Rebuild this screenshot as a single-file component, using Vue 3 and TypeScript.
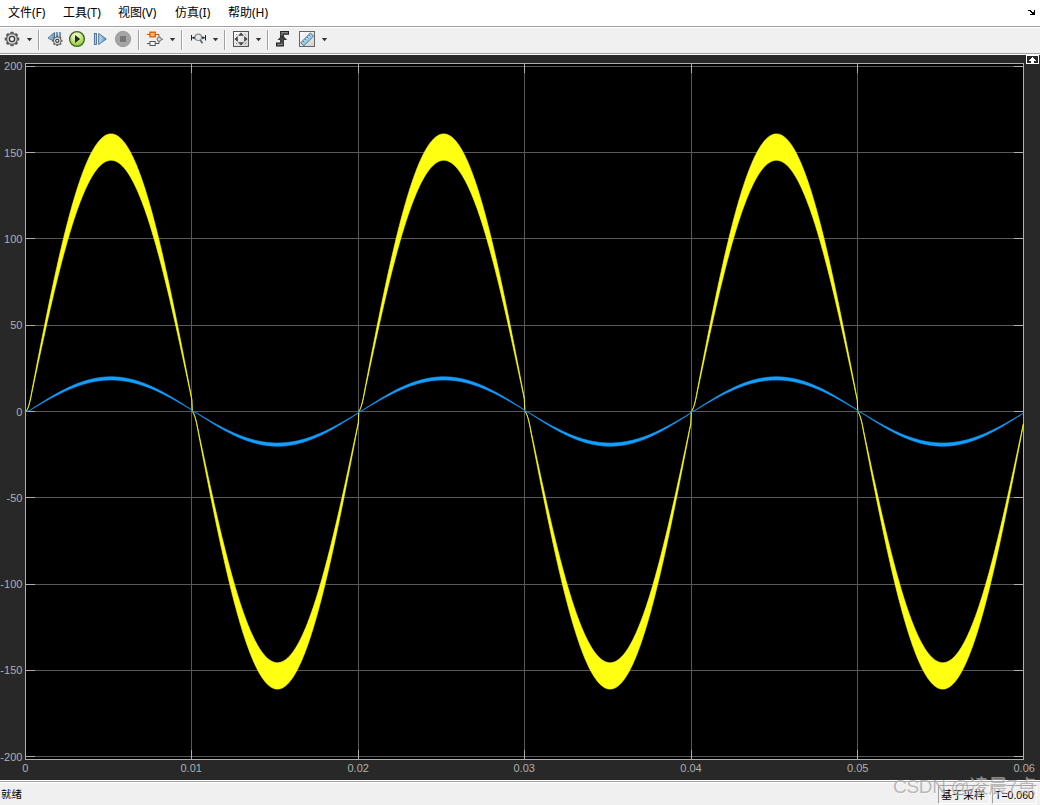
<script setup lang="ts">
interface Curve { fill: string; stroke: number; d: string }

const menus = ['文件(F)', '工具(T)', '视图(V)', '仿真(I)', '帮助(H)']

const zeroY = 411.5
const left = 25.5
const period = 998 / 3
const lag = 2.1

function band(outer: number, inner: number): string {
  const top: string[] = []
  const bottom: string[] = []
  for (let i = 0; i <= 1995; i++) {
    const t = i / 2
    const half = Math.floor(t / (period / 2))
    const sign = half % 2 === 0 ? 1 : -1
    const local = t - half * (period / 2)
    const ramp = local < 6 ? (local * local) / 12 + local * 0.15 : local - lag
    const s = Math.sin((2 * Math.PI * ramp) / period) * sign
    const x = (left + t + 0.3).toFixed(2)
    top.push(`${x},${(zeroY - outer * s).toFixed(2)}`)
    bottom.push(`${x},${(zeroY - inner * s).toFixed(2)}`)
  }
  return `M${top.join('L')}L${bottom.reverse().join('L')}Z`
}

const curves: Curve[] = [
  { fill: '#ffff11', stroke: 0.7, d: band(277.6, 251.2) },
  { fill: '#139fff', stroke: 0.7, d: band(34.7, 31.5) },
]

const yTicks = [
  { v: 200, y: 66.5, base: 70 },
  { v: 150, y: 152.5, base: 157 },
  { v: 100, y: 238.5, base: 243 },
  { v: 50, y: 325.5, base: 329 },
  { v: 0, y: 411.5, base: 416 },
  { v: -50, y: 497.5, base: 502 },
  { v: -100, y: 584.5, base: 588 },
  { v: -150, y: 670.5, base: 674 },
  { v: -200, y: 756.5, base: 761 },
]
const xTicks = [
  { label: '0', x: 25.5, mid: 25.2 },
  { label: '0.01', x: 191.5, mid: 191.2 },
  { label: '0.02', x: 358.5, mid: 358.2 },
  { label: '0.03', x: 524.5, mid: 524.2 },
  { label: '0.04', x: 691.5, mid: 691 },
  { label: '0.05', x: 857.5, mid: 857.8 },
  { label: '0.06', x: 1023.5, mid: 1024.2 },
]
const teeth = [0, 45, 90, 135, 180, 225, 270, 315]
</script>

<template>
  <div class="scope">
    <nav class="menubar">
      <span v-for="m in menus" :key="m">{{ m }}</span>
      <svg class="dock" width="8" height="8" viewBox="0 0 8 8" shape-rendering="crispEdges">
        <path d="M0 1h3v1h1v1h2V1h1v5H2V5h2V4H3V3H2V2H0z" fill="#000" />
      </svg>
    </nav>
    <div class="toolbar">
      <svg width="340" height="24" viewBox="0 28 340 24">
        <defs>
          <radialGradient id="run" cx=".45" cy=".3" r=".75">
            <stop offset="0" stop-color="#fbffe9" /><stop offset=".5" stop-color="#c3e77b" /><stop offset="1" stop-color="#7abb25" />
          </radialGradient>
          <linearGradient id="step" x1="0" x2="1"><stop offset="0" stop-color="#b9e0f7" /><stop offset="1" stop-color="#5697c7" /></linearGradient>
          <linearGradient id="box" x1="0" x2="1" y1="0" y2="1"><stop offset="0" stop-color="#fff" /><stop offset="1" stop-color="#cfcfcf" /></linearGradient>
        </defs>
        <g v-for="x in [38, 138, 181, 224, 267]" :key="x">
          <path :d="`M${x + .5} 30V50`" stroke="#a0a0a0" /><path :d="`M${x + 1.5} 30V50`" stroke="#fff" />
        </g>
        <path v-for="x in [29.5, 172.5, 215.5, 258.5, 324.5]" :key="x" :d="`M${x - 2.7} 38h5.4l-2.7 3.2z`" fill="#333" />
        <!-- settings -->
        <g transform="translate(12 39)">
          <rect v-for="a in teeth" :key="a" x="-1.6" y="-7.3" width="3.2" height="4" rx=".6" fill="#5c5c5c" :transform="`rotate(${a})`" />
          <circle r="5.4" fill="#dadada" stroke="#5c5c5c" stroke-width="1.2" />
          <circle r="2.6" fill="#f4f4f4" stroke="#3c3c3c" stroke-width="1.4" />
        </g>
        <!-- step back options -->
        <path d="M54.5 32.5v9L48 38z" fill="url(#step)" stroke="#42698d" stroke-width=".9" />
        <path d="M56.3 32.5h1.2v5h-1.2zM59.4 32.5h1.2v4h-1.2z" fill="#b7dbf0" stroke="#42698d" stroke-width=".7" />
        <g transform="translate(57.3 40.8)">
          <rect v-for="a in teeth" :key="a" x="-1" y="-5.2" width="2" height="3" fill="#666" :transform="`rotate(${a})`" />
          <circle r="3.9" fill="#e4e4e4" stroke="#555" stroke-width=".9" />
          <circle r="1.6" fill="#fff" stroke="#333" stroke-width="1.1" />
        </g>
        <!-- run -->
        <circle cx="77" cy="39" r="7.4" fill="url(#run)" stroke="#47632a" stroke-width="1.3" />
        <path d="M75 35l5.2 4-5.2 4z" fill="#252b24" />
        <!-- step forward -->
        <rect x="94.4" y="33.5" width="2" height="11" fill="#a9d2ec" stroke="#42698d" stroke-width=".9" />
        <path d="M98.7 33.5v11l7.6-5.5z" fill="url(#step)" stroke="#42698d" stroke-width=".9" />
        <!-- stop -->
        <circle cx="123" cy="39" r="7.7" fill="#a5a5a5" stroke="#969696" stroke-width=".8" />
        <rect x="120" y="36" width="6" height="6" fill="#777" />
        <!-- signal blocks -->
        <path d="M147 43.5h12v-2.7M162 39.3h1" fill="none" stroke="#555" />
        <path d="M147 34.5h12V37" fill="none" stroke="#c95616" />
        <rect x="150" y="32.2" width="5.2" height="4.6" fill="#f9bd83" stroke="#d4590f" stroke-width="1.3" />
        <rect x="150" y="41.5" width="5.2" height="4" fill="#f7f7f7" stroke="#555" />
        <circle cx="159.2" cy="39.2" r="2.1" fill="#ddd" stroke="#666" />
        <!-- horizontal zoom -->
        <path d="M191.5 35v5.5M205.5 35v5.5M192 37.8h3M202 37.8h3" fill="none" stroke="#222" />
        <path d="M194.6 36v3.6l-2-1.8zM202.4 36v3.6l2-1.8z" fill="#222" />
        <circle cx="198.3" cy="37.3" r="3.2" fill="#dceaf4" stroke="#888" stroke-width="1.1" />
        <path d="M200.2 40l2.3 3.2" stroke="#666" stroke-width="1.8" />
        <!-- fit to view -->
        <rect x="233.5" y="31.5" width="15" height="15" fill="url(#box)" stroke="#555" />
        <path d="M241 32.4l3 3.4h-6zM241 45.6l3-3.4h-6zM234.4 39l3.4-3v6zM247.6 39l-3.4-3v6z" fill="#444" />
        <path d="M236 35.2l1.2-1.2M246 35.2l-1.2-1.2M236 42.8l1.2 1.2M246 42.8l-1.2 1.2" fill="none" stroke="#888" />
        <!-- trigger -->
        <path d="M276 44.5h6V32.8h7" fill="none" stroke="#222" stroke-width="3.8" />
        <path d="M277 44.5h5V32.8h6" fill="none" stroke="#858585" stroke-width="1.4" />
        <path d="M282.3 35l4.9 5h-9.8z" fill="#333" />
        <path d="M282 38v5" stroke="#444" stroke-width="3.6" />
        <!-- measurements -->
        <rect x="299.5" y="31.5" width="15" height="15" fill="url(#box)" stroke="#666" />
        <path d="M300.7 42.9l9.7-9.9 3.2 3.1-9.7 9.6z" fill="#a4d1e8" stroke="#38658a" stroke-width=".9" />
        <path d="M303.2 41.2l1 1M305.2 39.2l1 1M307.2 37.2l1 1M309.2 35.2l1 1" stroke="#295b7c" stroke-width=".8" />
      </svg>
    </div>
    <main class="plot">
      <svg width="1040" height="725" viewBox="0 55 1040 725">
        <rect x="25" y="63" width="999" height="697" fill="#000" />
        <g fill="none" shape-rendering="crispEdges">
          <g stroke="#585858">
            <path v-for="t in yTicks" :key="t.v" :d="`M26 ${t.y}H1023`" />
            <path v-for="t in xTicks" :key="t.label" :d="`M${t.x} 64V759`" />
          </g>
          <g stroke="#afafaf">
            <path v-for="t in yTicks" :key="t.v" :d="`M26 ${t.y}h9M1014 ${t.y}h9`" />
            <path v-for="t in xTicks" :key="t.label" :d="`M${t.x} 64v9M${t.x} 750v9`" />
            <rect x="25.5" y="63.5" width="998" height="696" />
          </g>
        </g>
        <path v-for="c in curves" :key="c.fill" :d="c.d" :fill="c.fill" :stroke="c.fill" :stroke-width="c.stroke" stroke-linejoin="round" />
        <g class="labels">
          <text v-for="t in yTicks" :key="t.v" x="22.4" :y="t.base" text-anchor="end">{{ t.v }}</text>
          <text v-for="t in xTicks" :key="t.label" :x="t.mid" y="772" text-anchor="middle">{{ t.label }}</text>
        </g>
        <g shape-rendering="crispEdges">
          <rect x="1026.5" y="55.5" width="12" height="8" fill="#282828" stroke="#fff" />
          <path d="M1032 57h1v1h1v1h1v1h1v1h-2v2h-3v-2h-2v-1h1v-1h1v-1h1z" fill="#fff" />
        </g>
      </svg>
    </main>
    <footer class="status">
      <span class="ready">就绪</span>
      <span class="cell mode">基于采样</span>
      <span class="cell time">T=0.060</span>
    </footer>
    <div class="watermark">CSDN @凌晨7点</div>
  </div>
</template>

<style>
body { overflow: hidden; }
</style>

<style scoped>
.scope {
  position: relative;
  width: 1040px;
  height: 805px;
  display: flex;
  flex-direction: column;
  overflow: hidden;
  background: #f0f0f0;
  color: #000;
  font: 12px/16px "Noto Sans", "Noto Sans CJK SC", sans-serif;
}
.menubar {
  box-sizing: border-box;
  height: 28px;
  padding: 5px 4px 0 8px;
  display: grid;
  grid-template-columns: 55px 55px 57px 53px 1fr 8px;
  background: #fff;
  box-shadow: inset 0 -1px #fff, inset 0 -2px #a0a0a0;
}
.menubar span { white-space: nowrap; }
.dock { margin-top: 4px; }
.toolbar {
  box-sizing: border-box;
  height: 27px;
  border-bottom: 1px solid #fff;
  box-shadow: inset 0 -1px #a0a0a0;
}
.toolbar svg, .plot svg { display: block; }
.plot { height: 725px; background: #282828; }
.labels { font: 11px "Liberation Sans", sans-serif; fill: #afafaf; }
.status {
  box-sizing: border-box;
  height: 25px;
  border-top: 1px solid #fff;
  box-shadow: inset 0 1px #a0a0a0, inset 0 2px #fff;
  display: flex;
  align-items: flex-start;
  padding: 4px 3px 0 1px;
  font: 10.5px/18px "Liberation Sans", "Noto Sans CJK SC", sans-serif;
}
.ready { flex: 1; }
.cell {
  box-sizing: border-box;
  height: 19px;
  border: 1px solid #fff;
  border-left-color: #a0a0a0;
  border-top-color: #a0a0a0;
  white-space: nowrap;
}
.mode { width: 52px; padding-left: 2px; margin-right: 2px; font-size: 11px; }
.time { width: 45px; padding-left: 2px; }
.watermark {
  position: absolute;
  left: 893px;
  top: 775px;
  font: 19px/24px "Liberation Sans", "Noto Sans CJK SC", sans-serif;
  letter-spacing: -0.3px;
  color: rgba(165, 165, 165, 0.75);
  text-shadow: 1px 1px rgba(255, 255, 255, 0.35);
  white-space: nowrap;
}
</style>
